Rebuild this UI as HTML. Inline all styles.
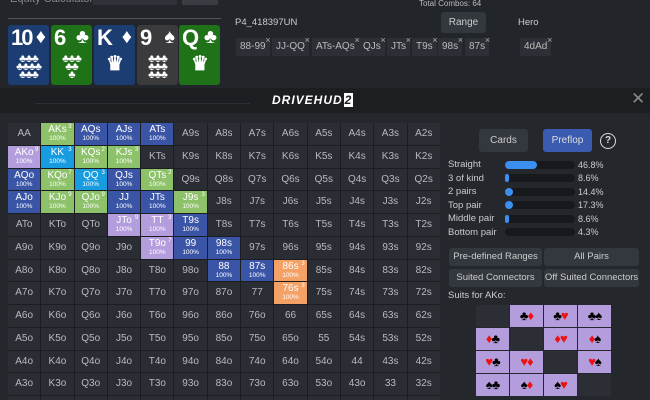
<!DOCTYPE html><html style="overflow:hidden;height:400px"><head><meta charset="utf-8"><style>
*{margin:0;padding:0;box-sizing:border-box}
body{width:650px;height:400px;overflow:hidden;background:#24272c;font-family:"Liberation Sans",sans-serif;color:#d0d3d8;position:relative}
.a{position:absolute}
.top{left:0;top:0;width:650px;height:88px;background:#222529}
.band{left:0;top:88px;width:650px;height:25px;background:#1c1e22}
.card{position:absolute;top:25px;width:41px;height:60px;border-radius:3px;color:#fff;font-weight:bold}
.card .r{position:absolute;left:3px;top:0px;font-size:22px}
.card .s{position:absolute;right:3px;top:1px;font-size:20px}
.card .p{position:absolute;left:0;width:100%;top:30px;text-align:center;font-size:11px;line-height:8px;letter-spacing:-1px}
.tag{position:absolute;top:38px;height:18px;background:#2c2f35;font-size:10px;color:#bbb;line-height:18px;padding:0 4px}
.tag:after{content:"×";position:absolute;right:-1px;top:-7px;font-size:9px;color:#aaa}
.g{position:absolute;left:8px;top:123px;display:grid;grid-template-columns:repeat(13,32.3px);grid-auto-rows:21.75px;gap:1px;background:#1b1d21}
.g div{background:#2a2d33;color:#b7bac0;font-size:10px;text-align:center;line-height:21.75px;position:relative;overflow:hidden}
.g div.h{line-height:11px;padding-top:1px;color:#fff}
.g div.h:after{content:"100%";display:block;font-size:6.5px;line-height:8px}
.g sup{position:absolute;right:2px;top:1px;font-size:6px;line-height:6px}
.gr{background:#8dc26a!important}.bl{background:#3a55a6!important}.lb{background:#179ddf!important}.pu{background:#b49ddd!important}.or{background:#f3a165!important}
.btn{position:absolute;background:#33373e;border-radius:3px;font-size:9.5px;text-align:center;color:#ccc}
.st{position:absolute;left:448px;font-size:9.5px;color:#ccc}
.bar{position:absolute;left:505px;width:70px;height:8px;border-radius:4px;background:#17191c}
.bar i{display:block;height:8px;border-radius:4px;background:#3b8ff0}
.pc{position:absolute;left:578px;font-size:9px;color:#ccc}
.sg{position:absolute;left:476px;top:305px;display:grid;grid-template-columns:repeat(4,33px);grid-auto-rows:22px;gap:1px}
.sg div{background:#b49ddd;text-align:center;font-size:13px;line-height:22px;letter-spacing:-1px}
.sg div.e{background:#2b2e34}
.k{color:#000}.rd{color:#e11}
</style></head><body>
<div class="a top"></div>
<div class="a" style="left:10px;top:-7px;font-size:11px;color:#888">Equity Calculator</div>
<div class="a" style="left:93px;top:-4px;width:84px;height:9px;background:#2f3238;border-radius:2px"></div>
<div class="a" style="left:182px;top:-4px;width:36px;height:9px;background:#3a3d43;border-radius:2px"></div>
<div class="a" style="left:8px;top:18px;width:213px;height:1px;background:#555"></div>
<div class="card" style="left:8px;background:#1c3d72"><span class="r" style="letter-spacing:-2px">10</span><span class="s">♦</span><div class="p">♣♣♣<br>♣♣♣♣<br>♣♣♣</div></div>
<div class="card" style="left:51px;background:#1f7218"><span class="r">6</span><span class="s">♣</span><div class="p">♣♣♣<br>♣♣<br>♣</div></div>
<div class="card" style="left:94px;background:#1c3d72"><span class="r">K</span><span class="s">♦</span><div class="p" style="font-size:20px;line-height:22px;top:28px">♛</div></div>
<div class="card" style="left:137px;background:#3b3b3d"><span class="r">9</span><span class="s">♠</span><div class="p">♣♣♣<br>♣♣♣<br>♣♣♣</div></div>
<div class="card" style="left:179px;background:#1f7218"><span class="r">Q</span><span class="s">♣</span><div class="p" style="font-size:20px;line-height:22px;top:28px">♛</div></div>
<div class="a" style="left:419px;top:-1px;font-size:8px;color:#bbb">Total Combos: 64</div>
<div class="a" style="left:235px;top:17px;font-size:9.5px;color:#ccc">P4_418397UN</div>
<div class="btn" style="left:441px;top:12px;width:45px;height:21px;line-height:21px;font-size:10px">Range</div>
<div class="a" style="left:518px;top:17px;font-size:9.5px;color:#ccc">Hero</div>
<div class="tag" style="left:236px">88-99</div><div class="tag" style="left:272px">JJ-QQ</div><div class="tag" style="left:312px">ATs-AQs</div><div class="tag" style="left:359px">QJs</div><div class="tag" style="left:387px">JTs</div><div class="tag" style="left:412px">T9s</div><div class="tag" style="left:438px">98s</div><div class="tag" style="left:465px">87s</div><div class="tag" style="left:520px">4dAd</div>
<div class="a band"></div>
<div class="a" style="left:35px;top:103px;width:215px;height:1px;background:#2c2f34"></div>
<div class="a" style="left:272px;top:93px;font-size:12px;font-weight:bold;font-style:italic;color:#fff;letter-spacing:1px">DRIVEHUD<span style="background:#fff;color:#1c1e22;padding:0 1px;margin-left:1px">2</span></div>
<div class="a" style="left:631px;top:89px;font-size:17px;color:#888">✕</div>
<div class="g">
<div>AA</div><div class="h gr">AKs<sup>3</sup></div><div class="h bl">AQs</div><div class="h bl">AJs</div><div class="h bl">ATs</div><div>A9s</div><div>A8s</div><div>A7s</div><div>A6s</div><div>A5s</div><div>A4s</div><div>A3s</div><div>A2s</div>
<div class="h pu">AKo<sup>9</sup></div><div class="h lb">KK<sup>3</sup></div><div class="h gr">KQs<sup>2</sup></div><div class="h gr">KJs<sup>3</sup></div><div>KTs</div><div>K9s</div><div>K8s</div><div>K7s</div><div>K6s</div><div>K5s</div><div>K4s</div><div>K3s</div><div>K2s</div>
<div class="h bl">AQo</div><div class="h gr">KQo<sup>7</sup></div><div class="h lb">QQ<sup>3</sup></div><div class="h bl">QJs</div><div class="h gr">QTs<sup>2</sup></div><div>Q9s</div><div>Q8s</div><div>Q7s</div><div>Q6s</div><div>Q5s</div><div>Q4s</div><div>Q3s</div><div>Q2s</div>
<div class="h bl">AJo</div><div class="h gr">KJo<sup>9</sup></div><div class="h gr">QJo<sup>9</sup></div><div class="h bl">JJ</div><div class="h bl">JTs</div><div class="h gr">J9s<sup>3</sup></div><div>J8s</div><div>J7s</div><div>J6s</div><div>J5s</div><div>J4s</div><div>J3s</div><div>J2s</div>
<div>ATo</div><div>KTo</div><div>QTo</div><div class="h pu">JTo<sup>9</sup></div><div class="h pu">TT<sup>3</sup></div><div class="h bl">T9s</div><div>T8s</div><div>T7s</div><div>T6s</div><div>T5s</div><div>T4s</div><div>T3s</div><div>T2s</div>
<div>A9o</div><div>K9o</div><div>Q9o</div><div>J9o</div><div class="h pu">T9o<sup>7</sup></div><div class="h bl">99</div><div class="h bl">98s</div><div>97s</div><div>96s</div><div>95s</div><div>94s</div><div>93s</div><div>92s</div>
<div>A8o</div><div>K8o</div><div>Q8o</div><div>J8o</div><div>T8o</div><div>98o</div><div class="h bl">88</div><div class="h bl">87s</div><div class="h or">86s<sup>3</sup></div><div>85s</div><div>84s</div><div>83s</div><div>82s</div>
<div>A7o</div><div>K7o</div><div>Q7o</div><div>J7o</div><div>T7o</div><div>97o</div><div>87o</div><div>77</div><div class="h or">76s<sup>3</sup></div><div>75s</div><div>74s</div><div>73s</div><div>72s</div>
<div>A6o</div><div>K6o</div><div>Q6o</div><div>J6o</div><div>T6o</div><div>96o</div><div>86o</div><div>76o</div><div>66</div><div>65s</div><div>64s</div><div>63s</div><div>62s</div>
<div>A5o</div><div>K5o</div><div>Q5o</div><div>J5o</div><div>T5o</div><div>95o</div><div>85o</div><div>75o</div><div>65o</div><div>55</div><div>54s</div><div>53s</div><div>52s</div>
<div>A4o</div><div>K4o</div><div>Q4o</div><div>J4o</div><div>T4o</div><div>94o</div><div>84o</div><div>74o</div><div>64o</div><div>54o</div><div>44</div><div>43s</div><div>42s</div>
<div>A3o</div><div>K3o</div><div>Q3o</div><div>J3o</div><div>T3o</div><div>93o</div><div>83o</div><div>73o</div><div>63o</div><div>53o</div><div>43o</div><div>33</div><div>32s</div>
<div>A2o</div><div>K2o</div><div>Q2o</div><div>J2o</div><div>T2o</div><div>92o</div><div>82o</div><div>72o</div><div>62o</div><div>52o</div><div>42o</div><div>32o</div><div>22</div>
</div>
<div class="btn" style="left:479px;top:129px;width:49px;height:23px;line-height:23px;font-size:10px">Cards</div>
<div class="btn" style="left:543px;top:129px;width:49px;height:23px;line-height:23px;font-size:10px;background:#3a5bb0;color:#ddd">Preflop</div>
<div class="a" style="left:600px;top:133px;width:16px;height:16px;border:1.5px solid #ddd;border-radius:50%;font-size:10px;text-align:center;line-height:13px;color:#ddd;font-weight:bold">?</div>
<div class="st" style="top:159px">Straight</div><div class="bar" style="top:161px"><i style="width:32px"></i></div><div class="pc" style="top:160px">46.8%</div>
<div class="st" style="top:173px">3 of kind</div><div class="bar" style="top:174px"><i style="width:4px"></i></div><div class="pc" style="top:173px">8.6%</div>
<div class="st" style="top:186px">2 pairs</div><div class="bar" style="top:188px"><i style="width:8px"></i></div><div class="pc" style="top:187px">14.4%</div>
<div class="st" style="top:200px">Top pair</div><div class="bar" style="top:201px"><i style="width:8px"></i></div><div class="pc" style="top:200px">17.3%</div>
<div class="st" style="top:213px">Middle pair</div><div class="bar" style="top:215px"><i style="width:4px"></i></div><div class="pc" style="top:214px">8.6%</div>
<div class="st" style="top:227px">Bottom pair</div><div class="bar" style="top:228px"><i style="width:0"></i></div><div class="pc" style="top:227px">4.3%</div>
<div class="btn" style="left:449px;top:248px;width:93px;height:18px;line-height:18px">Pre-defined Ranges</div>
<div class="btn" style="left:544px;top:248px;width:95px;height:18px;line-height:18px">All Pairs</div>
<div class="btn" style="left:449px;top:269px;width:93px;height:18px;line-height:18px">Suited Connectors</div>
<div class="btn" style="left:544px;top:269px;width:95px;height:18px;line-height:18px">Off Suited Connectors</div>
<div class="st" style="top:290px">Suits for AKo:</div>
<div class="sg">
<div class="e"></div><div><span class="k">♣</span><span class="rd">♦</span></div><div><span class="k">♣</span><span class="rd">♥</span></div><div><span class="k">♣♠</span></div>
<div><span class="rd">♦</span><span class="k">♣</span></div><div class="e"></div><div><span class="rd">♦♥</span></div><div><span class="rd">♦</span><span class="k">♠</span></div>
<div><span class="rd">♥</span><span class="k">♣</span></div><div><span class="rd">♥♦</span></div><div class="e"></div><div><span class="rd">♥</span><span class="k">♠</span></div>
<div><span class="k">♠♣</span></div><div><span class="k">♠</span><span class="rd">♦</span></div><div><span class="k">♠</span><span class="rd">♥</span></div><div class="e"></div>
</div>
</body></html>
